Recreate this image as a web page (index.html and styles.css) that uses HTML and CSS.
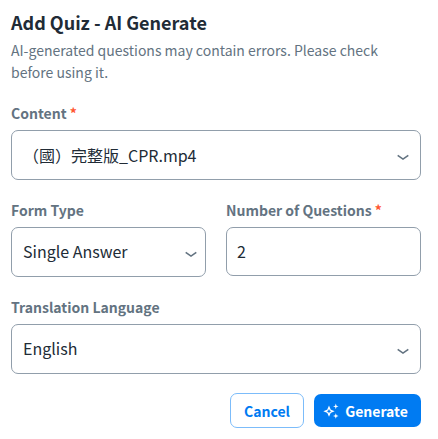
FILE: index.html
```html
<!DOCTYPE html>
<html lang="en">
<head>
  <meta charset="UTF-8" />
  <title>Add Quiz - AI Generate</title>
  <meta name="viewport" content="width=device-width, initial-scale=1.0" />
  <link rel="stylesheet" href="styles.css">
</head>
<body>

  <form class="quiz-form">
    <h1 class="title">Add Quiz - AI Generate</h1>
    <p class="subtitle">AI-generated questions may contain errors. Please check before using it.</p>

    <div class="field">
      <div class="label">Content <span class="required">*</span></div>
      <div class="control">
        <span class="file-name">（國）完整版_CPR.mp4</span>
        <svg class="chevron" viewBox="0 0 12 7"><path d="M0.7 1.3 L6 5.1 L11.3 1.3" /></svg>
      </div>
    </div>

    <div class="row">
      <div class="field">
        <div class="label">Form Type</div>
        <div class="control control-narrow">
          <span class="value">Single Answer</span>
          <svg class="chevron" viewBox="0 0 12 7"><path d="M0.7 1.3 L6 5.1 L11.3 1.3" /></svg>
        </div>
      </div>
      <div class="field">
        <div class="label">Number of Questions <span class="required">*</span></div>
        <div class="control control-input"><span class="value">2</span></div>
      </div>
    </div>

    <div class="field">
      <div class="label">Translation Language</div>
      <div class="control">
        <span class="value">English</span>
        <svg class="chevron" viewBox="0 0 12 7"><path d="M0.7 1.3 L6 5.1 L11.3 1.3" /></svg>
      </div>
    </div>

    <div class="actions">
      <button type="button" class="btn btn-cancel">Cancel</button>
      <button type="button" class="btn btn-generate">
        <svg class="sparkles" viewBox="0 0 16 16">
          <path class="star-outline" d="M6 4.2 L7.2 7 L10 8.2 L7.2 9.4 L6 12.2 L4.8 9.4 L2 8.2 L4.8 7 Z" />
          <path d="M12.8 0.6 L13.5 2.7 L15.6 3.4 L13.5 4.1 L12.8 6.2 L12.1 4.1 L10 3.4 L12.1 2.7 Z" />
          <path d="M12.8 10.2 L13.5 12.3 L15.6 13 L13.5 13.7 L12.8 15.8 L12.1 13.7 L10 13 L12.1 12.3 Z" />
        </svg>
        Generate
      </button>
    </div>
  </form>

</body>
</html>
```
FILE: styles.css
```css
body {
  margin: 0;
  background: #fff;
  font-family: "Noto Sans CJK TC", "Noto Sans", sans-serif;
  color: #212b36;
}

.quiz-form {
  padding: 8px 17px 0 11px;
}

.title {
  margin: 0;
  font-size: 18px;
  line-height: 28px;
  font-weight: 700;
}

.subtitle {
  margin: 3px 0 19px;
  font-size: 14px;
  line-height: 22px;
  color: #637381;
}

.field {
  margin-bottom: 19px;
}

.label {
  height: 28px;
  font-size: 14px;
  line-height: 22px;
  font-weight: 700;
  color: #637381;
}

.required {
  color: #ff5630;
}

.control {
  display: flex;
  align-items: center;
  justify-content: space-between;
  box-sizing: border-box;
  height: 50px;
  padding: 0 11px;
  border: 1px solid #919eab;
  border-radius: 7px;
  font-size: 16px;
  line-height: 24px;
}

.control-narrow {
  padding-right: 8px;
}

.control-input {
  height: 49px;
  padding: 0 10px;
}

.value {
  padding-bottom: 2px;
}

.row {
  display: grid;
  grid-template-columns: 1fr 1fr;
  gap: 20px;
}

.chevron {
  width: 12px;
  height: 7px;
  margin-top: 4px;
  fill: none;
  stroke: #637381;
  stroke-width: 1.6;
}

.actions {
  display: flex;
  justify-content: flex-end;
  align-items: center;
  gap: 10px;
}

.btn {
  display: flex;
  align-items: center;
  justify-content: center;
  box-sizing: border-box;
  padding: 0;
  border: none;
  border-radius: 7px;
  font-family: inherit;
  font-size: 14px;
  line-height: 22px;
  font-weight: 700;
}

.btn-cancel {
  width: 74px;
  height: 35px;
  border: 1px solid #7cbcfa;
  background: #fff;
  color: #007bf2;
}

.btn-generate {
  width: 107px;
  height: 33px;
  padding-right: 4px;
  background: #007bf2;
  color: #fff;
}

.sparkles {
  width: 16px;
  height: 16px;
  margin-right: 6px;
  fill: #fff;
}

.star-outline {
  fill: none;
  stroke: #fff;
  stroke-width: 1.3;
}
```
